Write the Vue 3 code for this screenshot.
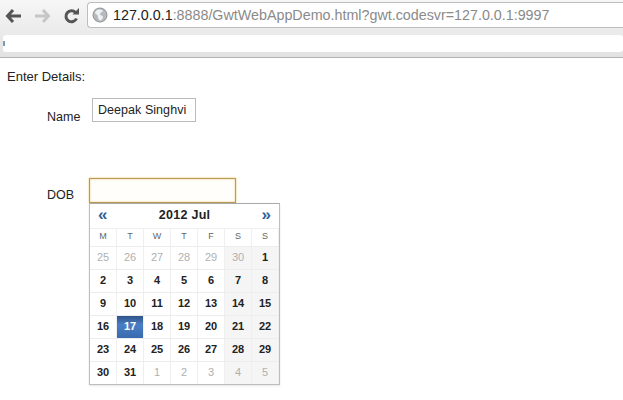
<script setup>
const days = ['M','T','W','T','F','S','S']
const weeks = [
  [25,26,27,28,29,30,1],[2,3,4,5,6,7,8],[9,10,11,12,13,14,15],[16,17,18,19,20,21,22],
  [23,24,25,26,27,28,29],[30,31,1,2,3,4,5]
]
const isOff = (r, d) => (r === 0 && d > 1) || (r === 5 && d < 6)
function cellClass(r, c, d) {
  return { off: isOff(r, d), weekend: c > 4, active: d === 17 }
}
</script>

<template>
  <div class="page">
    <header class="chrome">
      <div class="toolbar">
        <svg class="nav back" width="17" height="16" viewBox="0 0 17 16"><path d="M8 2 2.500 8 8 14M3 8h13" fill="none" stroke="#555" stroke-width="3"/></svg>
        <svg class="nav forward" width="17" height="16" viewBox="0 0 17 16"><path d="M9 2 14.500 8 9 14M14 8H1" fill="none" stroke="#c6c6c6" stroke-width="3"/></svg>
        <svg class="nav reload" width="17" height="17" viewBox="0 0 17 17"><path d="M13.500 10.500A5.500 5.500 0 1 1 12.500 4.500" fill="none" stroke="#555" stroke-width="3"/><path d="M9.500 6.500H16V0Z" fill="#555"/></svg>
        <div class="omnibox">
          <svg width="16" height="16" viewBox="0 0 16 16" class="globe"><circle cx="8" cy="8" r="7" fill="#b5b9bd" stroke="#8d9296"/><path d="M5 3c3-1 5 0 6 1-1 2-3 1-3 3s3 1 3 3-2 3-3 4C7 12 5 11 6 9 5 7 3 7 3 6c0-1 1-2 2-3z" fill="#eef0f2"/></svg>
          <span class="host">127.0.0.1</span><span class="rest">:8888/GwtWebAppDemo.html?gwt.codesvr=127.0.0.1:9997</span>
        </div>
      </div>
      <div class="bookmarks"><span class="dot"></span></div>
    </header>

    <main class="content">
      <div class="title">Enter Details:</div>
      <div class="row name-row">
        <label class="label">Name</label>
        <input class="name-input" value="Deepak Singhvi" readonly />
      </div>
      <div class="row dob-row">
        <label class="label">DOB</label>
        <input class="dob-input" readonly />
      </div>
      <div class="calendar">
        <div class="cal-head">
          <span class="arrow">«</span>
          <span class="month">2012 Jul</span>
          <span class="arrow">»</span>
        </div>
        <div class="grid weekdays">
          <div v-for="(d, i) in days" :key="i" class="wd">{{ d }}</div>
        </div>
        <div v-for="(w, r) in weeks" :key="r" class="grid week">
          <div v-for="(d, c) in w" :key="c" class="cell" :class="cellClass(r, c, d)">{{ d }}</div>
        </div>
      </div>
    </main>
  </div>
</template>

<style scoped>
.page { width: 623px; height: 400px; overflow: hidden; background: #fff; font-family: "Liberation Sans", Arial, sans-serif; color: #222; }
.chrome { height: 58px; box-sizing: border-box; border-bottom: 1px solid #b4b4b4; background: linear-gradient(#f6f6f6, #e2e2e2); }
.toolbar { height: 35px; display: flex; align-items: flex-start; padding: 7px 0 0 5px; box-sizing: border-box; }
.nav { flex: none; margin-top: 1px; }
.forward { margin-left: 12px; }
.reload { margin-left: 12px; }
.omnibox { flex: none; margin: -5px 0 0 7px; width: 545px; height: 26px; box-sizing: border-box; background: #fff; border: 1px solid #bdbdbd; border-right: none; border-radius: 4px 0 0 4px; display: flex; align-items: center; padding-left: 4px; font-size: 14.300px; white-space: nowrap; }
.globe { flex: none; margin-right: 5px; }
.host { color: #222; }
.rest { color: #8a8a8a; }
.bookmarks { height: 17px; background: #fff; border-radius: 3px; margin-left: 3px; position: relative; }
.dot { position: absolute; left: 0; top: 6px; width: 2px; height: 5px; background: #7d9ab5; }
.content { font-size: 12px; position: relative; }
.title { padding: 11px 0 0 7px; line-height: 15px; font-size: 13px; }
.row { display: flex; }
.label { width: 47px; margin-left: 47px; font-size: 12.500px; line-height: 15px; flex: none; }
.name-row { margin-top: 14px; height: 80px; }
.name-row .label { margin-top: 12px; width: 45px; }
.name-input { width: 104px; height: 24px; box-sizing: border-box; border: 1px solid #bbb; padding: 0 5px; font: 12.500px "Liberation Sans", Arial, sans-serif; color: #222; outline: none; letter-spacing: .05px; }
.dob-row { height: 25px; }
.dob-row .label { margin-top: 10px; width: 42px; }
.dob-input { width: 147px; height: 25px; box-sizing: border-box; border: 1px solid #b89b55; box-shadow: inset 0 0 2px #e6c36e, 0 0 2px #e6c36e; outline: none; background: #fffefb; }
.calendar { position: absolute; left: 89px; top: 145px; width: 191px; height: 182px; box-sizing: border-box; background: #fff; border: 1px solid #bdbdbd; border-top-color: #a9a9a9; box-shadow: 0 1px 2px rgba(0,0,0,.1); }
.cal-head { height: 24px; display: flex; align-items: center; justify-content: space-between; padding: 0 8px 2px 8px; box-sizing: border-box; }
.month { font: bold 12.500px "Liberation Sans", Arial, sans-serif; letter-spacing: .3px; color: #222; }
.arrow { font: bold 17px "Liberation Sans", Arial, sans-serif; color: #2f5f97; line-height: 18px; }
.grid { display: grid; grid-template-columns: repeat(7, 27px); }
.weekdays { height: 18px; }
.wd { font-size: 9px; line-height: 15px; text-align: center; color: #666; border-right: 1px solid #efefef; border-top: 1px solid #efefef; box-sizing: border-box; }
.week { height: 23px; }
.cell { box-sizing: border-box; border-top: 1px solid #ececec; border-right: 1px solid #efefef; font-size: 11px; font-weight: bold; line-height: 21px; text-align: center; color: #222; }
.cell.off { color: #b0b0b0; font-weight: normal; }
.cell.weekend { background: #f5f5f5; }
.cell.active { background: linear-gradient(#2f5488, #4a7ec4 40%, #3a6aae); color: #fff; }
</style>
